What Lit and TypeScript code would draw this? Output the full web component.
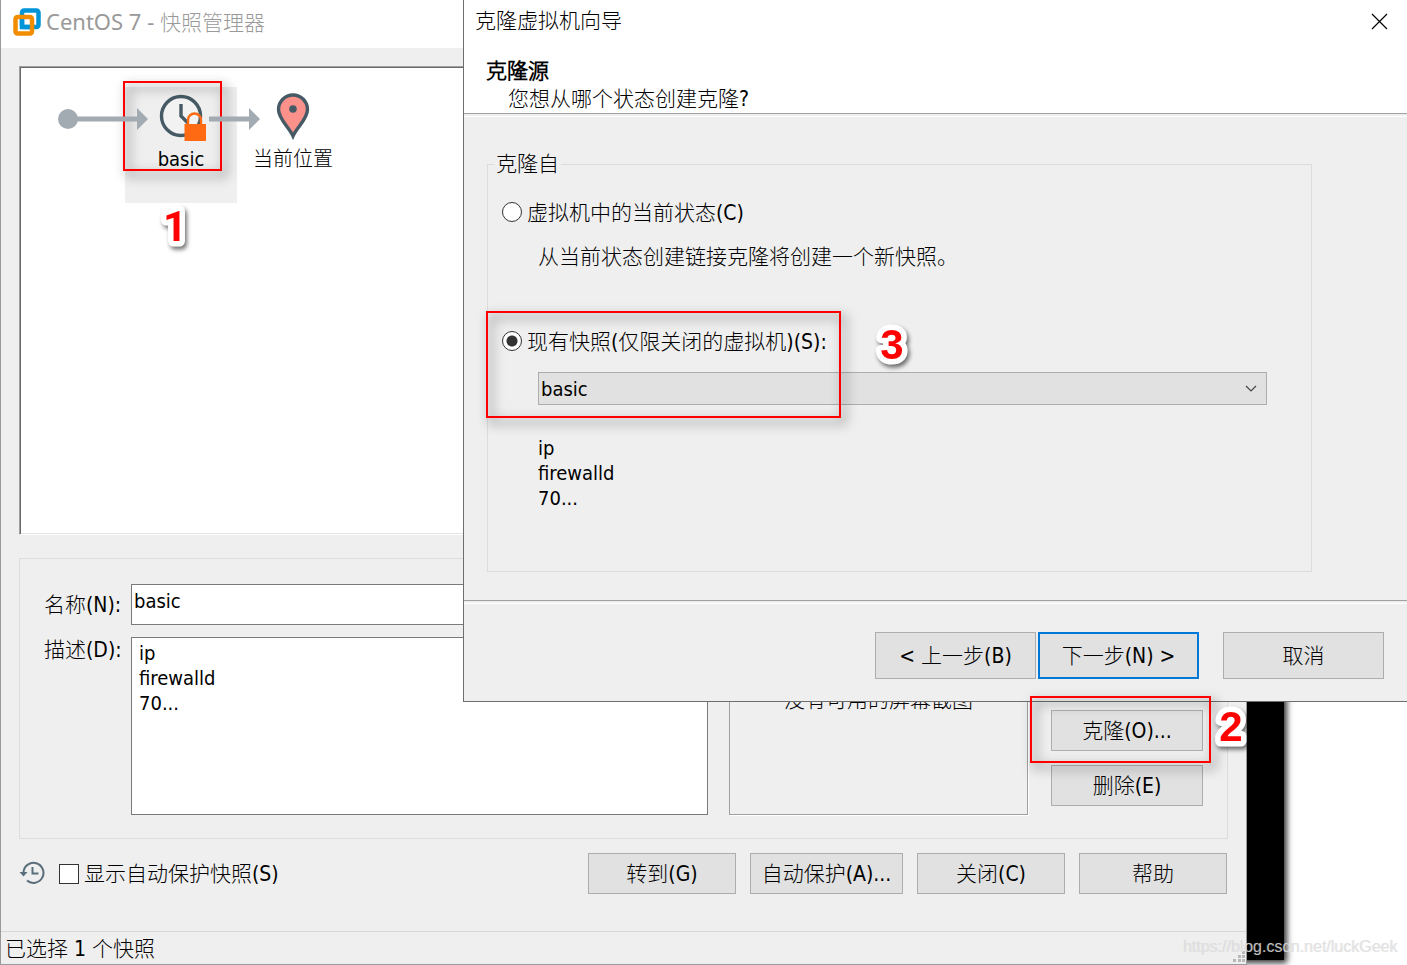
import { LitElement, html, css, svg } from "lit";
import { customElement, property, state } from "lit/decorators.js";
import { classMap } from "lit/directives/class-map.js";

const controls = css`
  * {
    box-sizing: border-box;
  }
  button,
  input,
  textarea,
  select {
    font: inherit;
    color: #000;
    margin: 0;
    border-radius: 0;
  }
  .btn {
    border: 1px solid #adadad;
    background: #e1e1e1;
    padding: 0;
    white-space: nowrap;
  }
  .btn.primary {
    border: 2px solid #0078d7;
  }
`;

/* White-outlined red step number, laid over the windows. */
@customElement("step-mark")
export class StepMark extends LitElement {
  @property() label = "";

  static styles = css`
    :host {
      display: block;
      pointer-events: none;
    }
    .digit {
      display: block;
      width: 60px;
      height: 60px;
      filter: drop-shadow(2px 3px 2px rgba(0, 0, 0, 0.55));
    }
    text {
      font: bold 42px "Liberation Sans", Arial, sans-serif;
      fill: #f00;
      stroke: #fff;
      stroke-width: 11px;
      stroke-linejoin: round;
      paint-order: stroke;
      text-anchor: middle;
    }
    text.plain {
      font-family: Roboto, sans-serif;
    }
  `;

  render() {
    return html`<svg class="digit" viewBox="0 0 60 60">
      <text class=${classMap({ plain: this.label === "1" })} x="30" y="45">${this.label}</text>
    </svg>`;
  }
}

@customElement("snapshot-manager")
export class SnapshotManager extends LitElement {
  @state() private autoProtect = false;

  static styles = [
    controls,
    css`
      :host {
        display: flex;
        flex-direction: column;
        box-sizing: border-box;
        background: #efefef;
        border: 1px solid #9a9a9a;
        border-top: 0;
      }
      .titlebar {
        display: flex;
        align-items: center;
        gap: 5px;
        height: 48px;
        padding: 0 12px 4px;
        background: #fff;
        color: #999;
        flex: none;
      }
      .titlebar .vm {
        font-family: "Noto Sans", sans-serif;
        font-size: 22px;
      }
      .titlebar svg {
        width: 28px;
        height: 28px;
      }
      .canvas {
        flex: 1;
        margin: 18px 18px 0;
        border: 1px solid #a0a0a0;
        border-right-color: #fff;
        border-bottom-color: #fff;
        box-shadow: inset 1px 1px #696969, inset 0 -1px #e3e3e3;
        background: #fff;
        display: flex;
        align-items: flex-start;
        padding: 20px 0 0;
        min-height: 0;
      }
      .node {
        position: relative;
        width: 112px;
        height: 116px;
        display: flex;
        flex-direction: column;
        align-items: center;
        padding-top: 6px;
        white-space: nowrap;
      }
      .node.root {
        width: 105px;
        padding-right: 9px;
      }
      .node.selected {
        background: #efefef;
      }
      .node svg.icon {
        width: 52px;
        height: 54px;
        flex: none;
      }
      .node .name {
        font-size: 20px;
        line-height: 25px;
      }
      .link {
        position: absolute;
        z-index: 1;
        top: 21px;
        left: 57px;
        height: 22px;
        width: 72px;
      }
      .link.short {
        left: 84px;
        width: 52px;
      }
      .details {
        display: grid;
        grid-template-columns: 1fr 299px 175px;
        flex: none;
        height: 281px;
        margin: 23px 18px 0;
        padding: 25px 24px 23px;
        border: 1px solid #dcdcdc;
      }
      .form {
        display: grid;
        grid-template-columns: 77px 1fr;
        grid-template-rows: 41px 1fr;
        gap: 12px 10px;
        margin-right: 21px;
      }
      .form label {
        text-align: right;
        line-height: 27px;
        white-space: nowrap;
      }
      .form label.name {
        padding-top: 8px;
      }
      .form input,
      .form textarea {
        width: 100%;
        height: 100%;
        border: 1px solid #7a7a7a;
        background: #fff;
        font-size: 20px;
        line-height: 25px;
        resize: none;
        outline: none;
        display: block;
      }
      .form input {
        padding: 3px 2px 11px;
      }
      .form textarea {
        padding: 3px 7px;
      }
      .preview {
        display: flex;
        align-items: center;
        justify-content: center;
        border: 1px solid #a0a0a0;
        box-shadow: 1px 1px #fff;
      }
      .side {
        display: flex;
        flex-direction: column;
        justify-content: flex-end;
        gap: 14px;
        padding: 0 0 9px 23px;
      }
      .side .btn,
      .actions .btn {
        height: 41px;
      }
      .actions {
        display: flex;
        align-items: center;
        flex: none;
        gap: 14px;
        margin: 14px 19px 37px 18px;
      }
      .auto {
        flex: 1;
        display: flex;
        align-items: center;
      }
      .auto svg {
        width: 26px;
        height: 26px;
        margin-right: 14px;
      }
      .auto input {
        appearance: none;
        width: 20px;
        height: 20px;
        margin-right: 5px;
        border: 1px solid #333;
        background: #fff;
      }
      .auto input.on {
        background: #333;
        box-shadow: inset 0 0 0 4px #fff;
      }
      .actions .btn {
        width: 148px;
      }
      .actions .btn.wide {
        width: 153px;
      }
      .status {
        display: flex;
        justify-content: space-between;
        align-items: center;
        flex: none;
        height: 33px;
        padding: 2px 1px 0 4px;
        border-top: 1px solid #d7d7d7;
      }
      .status svg {
        width: 12px;
        height: 12px;
        align-self: flex-end;
        margin-bottom: 1px;
      }
    `,
  ];

  private arrow(width: number) {
    return svg`<path d="M0 8.500H${width - 11}V0L${width} 11L${width - 11} 22V13.500H0Z" fill="#a2aab2"/>`;
  }

  render() {
    return html`
      <header class="titlebar">
        <svg viewBox="0 0 28 28" fill="none" stroke-width="4.500">
          <rect x="9" y="2.500" width="16.500" height="16.500" rx="2" stroke="#0095d9" />
          <rect x="2.500" y="9" width="16.500" height="16.500" rx="2" stroke="#f28c00" />
          <path d="M9 11.500v7.500h7.500" stroke="#0095d9" />
        </svg>
        <span><span class="vm">CentOS 7 - </span>快照管理器</span>
      </header>

      <div class="canvas">
        <div class="node root">
          <svg class="icon" viewBox="0 0 52 54">
            <circle cx="26" cy="26" r="10" fill="#a2aab2" />
          </svg>
          <svg class="link" viewBox="0 0 72 22">${this.arrow(71)}</svg>
        </div>
        <div class="node selected">
          <svg class="icon" viewBox="0 0 52 54">
            <circle cx="26" cy="23" r="19.500" fill="#f2f2f2" stroke="#455a64" stroke-width="3.400" />
            <path d="M26 11v12l7 7" fill="none" stroke="#455a64" stroke-width="3.400" />
            <path d="M33 32v-5a6.500 6.500 0 0 1 13 0v5" fill="none" stroke="#ff6a13" stroke-width="2.400" />
            <rect x="29.500" y="31" width="21.500" height="17" fill="#ff6a13" />
          </svg>
          <span class="name">basic</span>
          <svg class="link short" viewBox="0 0 52 22">${this.arrow(51)}</svg>
        </div>
        <div class="node">
          <svg class="icon" viewBox="0 0 52 54">
            <path
              d="M26 43C22 34 11.500 26 11.500 16.500a14.500 14.500 0 0 1 29 0C40.500 26 30 34 26 43Z"
              fill="#fa918b"
              stroke="#455a64"
              stroke-width="3.400"
            />
            <circle cx="26" cy="16" r="3.800" fill="#455a64" />
          </svg>
          <span class="name">当前位置</span>
        </div>
      </div>

      <section class="details">
        <div class="form">
          <label class="name" for="name">名称(N):</label>
          <input id="name" type="text" value="basic" />
          <label for="desc">描述(D):</label>
          <textarea id="desc" .value=${"ip\nfirewalld\n70..."}></textarea>
        </div>
        <div class="preview">没有可用的屏幕截图</div>
        <div class="side">
          <button class="btn">克隆(O)...</button>
          <button class="btn">删除(E)</button>
        </div>
      </section>

      <div class="actions">
        <div class="auto">
          <svg viewBox="0 0 26 26" fill="none" stroke="#5a6e7c" stroke-width="2">
            <path d="M4.500 11a10 10 0 1 1 3.500 8.500" />
            <path d="M13.500 6v6.500h6" />
            <path d="M0.500 11h8L4.500 15.500Z" fill="#5a6e7c" stroke="none" />
          </svg>
          <input
            id="auto"
            type="checkbox"
            class=${classMap({ on: this.autoProtect })}
            .checked=${this.autoProtect}
            @change=${() => (this.autoProtect = !this.autoProtect)}
          />
          <label for="auto">显示自动保护快照(S)</label>
        </div>
        <button class="btn">转到(G)</button>
        <button class="btn wide">自动保护(A)...</button>
        <button class="btn">关闭(C)</button>
        <button class="btn">帮助</button>
      </div>

      <footer class="status">
        <span>已选择 1 个快照</span>
        <svg viewBox="0 0 12 12" fill="#b8b8b8">
          <path d="M9 0h3v3h-3zM5 4h3v3h-3zM9 4h3v3h-3zM0 8h3v3h-3zM5 8h3v3h-3zM9 8h3v3h-3z" />
        </svg>
      </footer>
    `;
  }
}

@customElement("clone-wizard")
export class CloneWizard extends LitElement {
  @state() private source = "snapshot";

  static styles = [
    controls,
    css`
      :host {
        display: flex;
        flex-direction: column;
        box-sizing: border-box;
        background: #efefef;
        border: 1px solid #6e6e6e;
        border-top: 0;
        border-right: 0;
      }
      .head {
        background: #fff;
        padding: 6px 19px 0 11px;
        height: 113px;
      }
      .titlebar {
        display: flex;
        justify-content: space-between;
        align-items: center;
        height: 30px;
      }
      .close {
        border: 0;
        padding: 0;
        background: none;
        width: 17px;
        height: 17px;
      }
      .close svg {
        display: block;
        width: 17px;
        height: 17px;
      }
      h1 {
        font-size: 21px;
        line-height: 28px;
        font-weight: 700;
        margin: 21px 0 0 11px;
      }
      p {
        margin: 0;
        line-height: 28px;
      }
      .head p {
        margin-left: 33px;
      }
      .rule {
        height: 4px;
        border-top: 1px solid #a0a0a0;
        border-bottom: 1px solid #fff;
      }
      fieldset {
        margin: 34px 95px 28px 23px;
        padding: 0 44px 0 14px;
        border: 1px solid #dcdcdc;
        min-width: 0;
        height: 421px;
      }
      legend {
        margin-left: -8px;
        padding: 0 2px;
        line-height: 26px;
      }
      .option {
        display: flex;
        align-items: center;
        gap: 5px;
        height: 28px;
        margin-top: 22px;
      }
      .option.second {
        margin-top: 57px;
      }
      input[type="radio"] {
        appearance: none;
        width: 20px;
        height: 20px;
        margin-bottom: 2px;
        border: 1px solid #333;
        border-radius: 50%;
        background: #fff;
      }
      input[type="radio"]:checked {
        background: radial-gradient(circle, #333 0 5px, #fff 6px);
      }
      .indent {
        margin-left: 36px;
      }
      .hint {
        margin-top: 16px;
      }
      .picker {
        position: relative;
        margin-top: 16px;
      }
      select {
        appearance: none;
        display: block;
        width: 100%;
        height: 33px;
        padding: 0 2px;
        border: 1px solid #adadad;
        background: #e1e1e1;
        font-size: 20px;
      }
      .picker svg {
        position: absolute;
        right: 10px;
        top: 12px;
        width: 12px;
        height: 9px;
      }
      .note {
        font-size: 20px;
        line-height: 25px;
        margin-top: 31px;
        white-space: pre-line;
      }
      .buttons {
        display: flex;
        justify-content: flex-end;
        padding: 28px 23px 22px;
      }
      .buttons .btn {
        width: 161px;
        height: 47px;
        margin-left: 2px;
      }
      .buttons .btn.cancel {
        margin-left: 24px;
      }
    `,
  ];

  private pick(value: string) {
    this.source = value;
  }

  render() {
    return html`
      <header class="head">
        <div class="titlebar">
          <span>克隆虚拟机向导</span>
          <button class="close" aria-label="关闭">
            <svg viewBox="0 0 17 17" stroke="#000" stroke-width="1.200">
              <path d="M1 1l15 15M16 1L1 16" />
            </svg>
          </button>
        </div>
        <h1>克隆源</h1>
        <p>您想从哪个状态创建克隆?</p>
      </header>
      <div class="rule"></div>

      <fieldset>
        <legend>克隆自</legend>
        <div class="option">
          <input
            id="current"
            type="radio"
            name="source"
            .checked=${this.source === "current"}
            @change=${() => this.pick("current")}
          />
          <label for="current">虚拟机中的当前状态(C)</label>
        </div>
        <p class="indent hint">从当前状态创建链接克隆将创建一个新快照。</p>
        <div class="option second">
          <input
            id="snapshot"
            type="radio"
            name="source"
            .checked=${this.source === "snapshot"}
            @change=${() => this.pick("snapshot")}
          />
          <label id="snapshot-label" for="snapshot">现有快照(仅限关闭的虚拟机)(S):</label>
        </div>
        <div class="picker indent">
          <select aria-labelledby="snapshot-label">
            <option>basic</option>
          </select>
          <svg viewBox="0 0 12 9" fill="none" stroke="#444" stroke-width="1.200">
            <path d="M1 2l5 5l5-5" />
          </svg>
        </div>
        <div class="indent note">${"ip\nfirewalld\n70..."}</div>
      </fieldset>

      <div class="rule"></div>
      <div class="buttons">
        <button class="btn">&lt; 上一步(B)</button>
        <button class="btn primary">下一步(N) &gt;</button>
        <button class="btn cancel">取消</button>
      </div>
    `;
  }
}

@customElement("app-root")
export class AppRoot extends LitElement {
  static styles = css`
    :host {
      display: block;
      position: relative;
      height: 100vh;
      overflow: hidden;
      background: #fff;
      color: #000;
      font-family: "DejaVu Sans Condensed", "Noto Sans CJK SC Light", "Noto Sans CJK SC", sans-serif;
      font-size: 21px;
      line-height: 28px;
    }
    .console,
    snapshot-manager,
    clone-wizard,
    .frame,
    step-mark,
    .watermark {
      position: absolute;
    }
    .console {
      inset: 0 123px 5px 0;
      background: #000;
      box-shadow: 2px 2px 6px 1px rgba(0, 0, 0, 0.8);
    }
    snapshot-manager {
      inset: 0 160px 0 0;
    }
    clone-wizard {
      left: 463px;
      right: 0;
      top: 0;
    }
    .frame {
      box-sizing: border-box;
      border: 2px solid #f00;
      filter: drop-shadow(4px 5px 6px rgba(0, 0, 0, 0.7));
      pointer-events: none;
    }
    .frame.one {
      left: 123px;
      top: 81px;
      width: 99px;
      height: 90px;
    }
    .frame.two {
      right: 196px;
      bottom: 202px;
      width: 181px;
      height: 67px;
    }
    .frame.three {
      left: 486px;
      top: 311px;
      width: 355px;
      height: 107px;
    }
    step-mark.one {
      left: 145px;
      top: 196px;
    }
    step-mark.two {
      right: 146px;
      bottom: 209px;
    }
    step-mark.three {
      left: 862px;
      top: 314px;
    }
    .watermark {
      right: 9px;
      bottom: 8px;
      font: 16px/20px "Liberation Sans", Arial, sans-serif;
      color: rgba(225, 225, 225, 0.85);
      text-shadow: -1px 0 rgba(160, 160, 160, 0.25);
    }
  `;

  render() {
    return html`
      <div class="console"></div>
      <snapshot-manager></snapshot-manager>
      <clone-wizard></clone-wizard>
      <div class="frame one"></div>
      <div class="frame two"></div>
      <div class="frame three"></div>
      <step-mark class="one" label="1"></step-mark>
      <step-mark class="two" label="2"></step-mark>
      <step-mark class="three" label="3"></step-mark>
      <span class="watermark">https://blog.csdn.net/luckGeek</span>
    `;
  }
}
